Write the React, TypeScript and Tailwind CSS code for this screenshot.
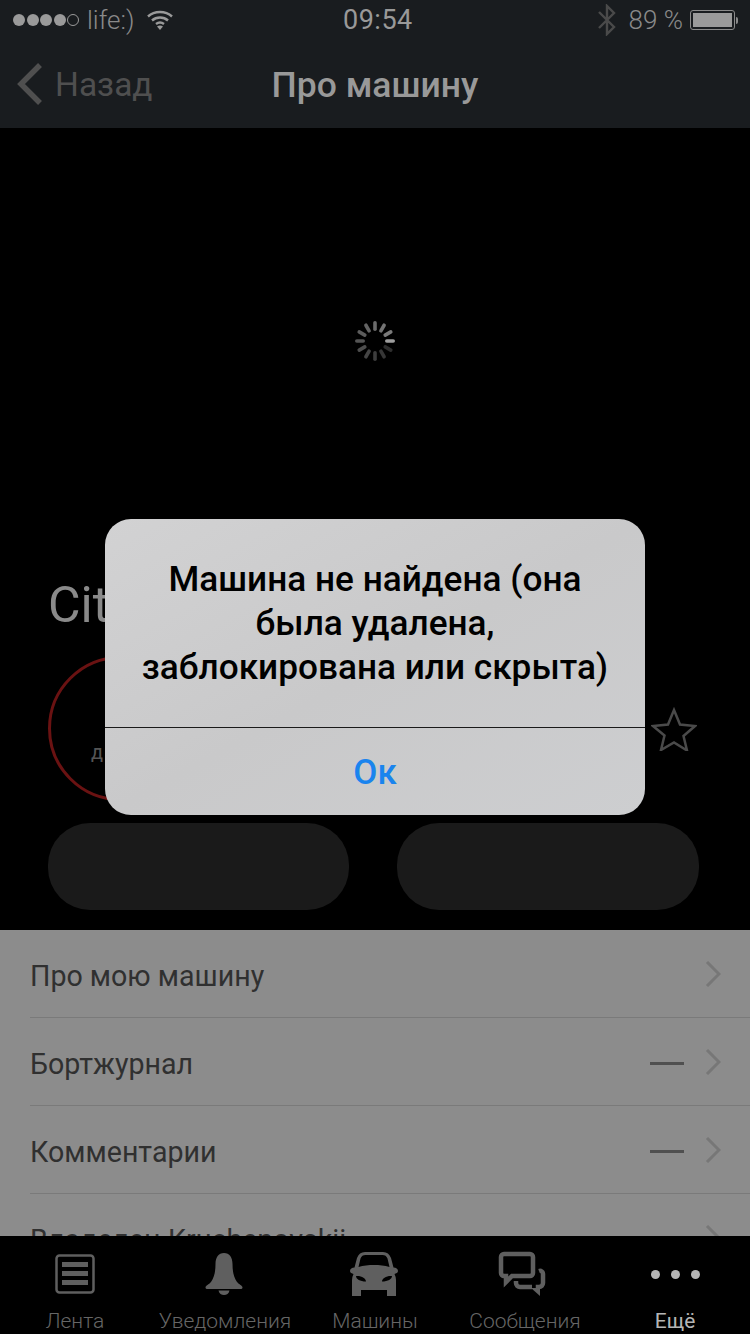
const rows = [
  { label: "Про мою машину", dash: false },
  { label: "Бортжурнал", dash: true },
  { label: "Комментарии", dash: true },
  { label: "Владелец Kruchenovskii", dash: false },
];

const spokes = [0, 30, 60, 90, 120, 150, 180, 210, 240, 270, 300, 330];

function Spinner() {
  return (
    <svg width="40" height="40" viewBox="0 0 40 40">
      {spokes.map((a, i) => (
        <rect
          key={a}
          x="18.2"
          y="0"
          width="3.6"
          height="10"
          rx="1.8"
          fill="#fff"
          opacity={i === 3 ? 0.62 : 0.18 + ((i + 8) % 12) * 0.03}
          transform={`rotate(${a} 20 20)`}
        />
      ))}
    </svg>
  );
}

function Chevron({ className }: { className: string }) {
  return (
    <svg className={className} width="16" height="28" viewBox="0 0 16 28" fill="none">
      <path d="M2 2l12 12L2 26" stroke="currentColor" strokeWidth="3" />
    </svg>
  );
}

function Row({ label, dash }: { label: string; dash: boolean }) {
  return (
    <div className="ml-[30px] flex h-[88px] shrink-0 items-center border-b border-[#7a7a7a] pr-[29px]">
      <span className="flex-1 pt-[5px] text-[28.6px] whitespace-nowrap text-[#303030]">{label}</span>
      {dash && <span className="mt-[3px] mr-[21px] h-[3px] w-[34px] bg-[#505050]" />}
      <Chevron className="text-[#777]" />
    </div>
  );
}

function FeedIcon() {
  return (
    <svg width="40" height="40" viewBox="0 0 40 40" fill="none">
      <rect x="1.5" y="1.5" width="37" height="37" rx="3" stroke="#5f5f5f" strokeWidth="2.500" />
      <rect x="7" y="8" width="26" height="5" fill="#5f5f5f" />
      <rect x="7" y="17" width="26" height="5" fill="#5f5f5f" />
      <rect x="7" y="26" width="26" height="5" fill="#5f5f5f" />
    </svg>
  );
}

function BellIcon() {
  return (
    <svg className="mr-[2px]" width="38" height="42" viewBox="0 0 38 42" fill="#5f5f5f">
      <path d="M19 0c5.500 0 8.500 4.500 8.500 11 0 7 1 13 4.500 18 2 2.500 5.500 3.500 5.500 5.500 0 1-1 1.500-2 1.500H2.500c-1 0-2-.5-2-1.500 0-2 3.500-3 5.500-5.500 3.500-5 4.500-11 4.500-18C10.500 4.500 13.500 0 19 0z" />
      <path d="M13.500 37.500h11c-.5 3-3 4.500-5.500 4.500s-5-1.500-5.500-4.500z" />
    </svg>
  );
}

function CarIcon() {
  return (
    <svg className="mr-[3px]" width="48" height="44" viewBox="0 0 48 44" fill="#5f5f5f">
      <path
        fillRule="evenodd"
        d="M15 0h18c4 0 6.500 2 8 6l2.500 9.500c2.500 0 4.500 1.500 4.500 3.500s-2 2.500-3.500 3c1 2 1.500 4 1.500 6v16h-9v-6H11v6H2V28c0-2 .5-4 1.500-6C2 21.500 0 21 0 19s2-3.500 4.500-3.500L7 6c1.500-4 4-6 8-6zm.5 3c-2.500 0-4 1-5 3.500L8.500 15c5-1.500 10-2 15.500-2s10.500.5 15.500 2L37.500 6.500c-1-2.500-2.500-3.500-5-3.500h-17zM6 24c0 3 4 5.500 10 5.500 0-3-4.500-6-10-5.500zm36 0c-5.500-.5-10 2.500-10 5.500 6 0 10-2.500 10-5.500z"
      />
    </svg>
  );
}

function ChatIcon() {
  return (
    <svg className="mr-[6px]" width="48" height="46" viewBox="0 0 48 46" fill="none">
      <path
        d="M6 3h26a3 3 0 0 1 3 3v16a3 3 0 0 1-3 3H14l-6 6v-6H6a3 3 0 0 1-3-3V6a3 3 0 0 1 3-3z"
        stroke="#5f5f5f"
        strokeWidth="4.500"
      />
      <path
        d="M41 20a3 3 0 0 1 4 3v9a4 4 0 0 1-4 4h-1v1M34 36H22a4 4 0 0 1-4-4v-2"
        stroke="#5f5f5f"
        strokeWidth="4.500"
      />
      <path d="M33 37h9v8z" fill="#5f5f5f" />
    </svg>
  );
}

function DotsIcon() {
  return (
    <div className="flex gap-[11px]">
      <span className="h-[9px] w-[9px] rounded-full bg-[#b5b5b5]" />
      <span className="h-[9px] w-[9px] rounded-full bg-[#b5b5b5]" />
      <span className="h-[9px] w-[9px] rounded-full bg-[#b5b5b5]" />
    </div>
  );
}

const tabs = [
  { label: "Лента", icon: <FeedIcon />, active: false },
  { label: "Уведомления", icon: <BellIcon />, active: false },
  { label: "Машины", icon: <CarIcon />, active: false },
  { label: "Сообщения", icon: <ChatIcon />, active: false },
  { label: "Ещё", icon: <DotsIcon />, active: true },
];

export default function App() {
  return (
    <div className="relative flex h-[1334px] w-[750px] flex-col overflow-hidden bg-black font-['Roboto',sans-serif]">
      <header className="h-[128px] shrink-0 bg-[#191c1f]">
        <div className="flex h-[40px] items-center pl-[13px] pr-[12px] text-[26px] text-[#8a8a8a]">
          <div className="flex w-[330px] items-center">
            <div className="flex items-center gap-[1.500px]">
              <span className="h-[12px] w-[12px] rounded-full bg-[#9a9a9a]" />
              <span className="h-[12px] w-[12px] rounded-full bg-[#9a9a9a]" />
              <span className="h-[12px] w-[12px] rounded-full bg-[#9a9a9a]" />
              <span className="h-[12px] w-[12px] rounded-full bg-[#9a9a9a]" />
              <span className="h-[12px] w-[12px] rounded-full border border-[#9a9a9a]" />
            </div>
            <span className="ml-[8px] font-light">life:)</span>
            <svg className="ml-[13px]" width="26" height="20" viewBox="0 0 26 20" fill="none" stroke="#9a9a9a" strokeWidth="2.400">
              <path d="M1 6.500C7.500 .5 18.500 .5 25 6.500" />
              <path d="M5 10.500c4.500-4 11.500-4 16 0" />
              <path d="M9 14c2.500-2 5.500-2 8 0" />
              <path d="M13 20l-3-3.500c2-1.200 4-1.200 6 0z" fill="#9a9a9a" stroke="none" />
            </svg>
          </div>
          <span className="pt-[1px] text-[27px] tracking-[0.5px] text-[#999]">09:54</span>
          <div className="flex flex-1 items-center justify-end">
            <svg width="18" height="32" viewBox="0 0 18 32" fill="none" stroke="#4a4a4a" strokeWidth="2.400">
              <path d="M1 8l15 15-7 7V2l7 7L1 24" />
            </svg>
            <span className="ml-[13px] font-light">89 %</span>
            <div className="ml-[7px] flex items-center">
              <div className="h-[20px] w-[45px] rounded-[3px] border border-[#8a8a8a] p-[2px]">
                <div className="h-full w-[39px] bg-[#9a9a9a]" />
              </div>
              <span className="ml-[1px] h-[7px] w-[2px] rounded-r bg-[#8a8a8a]" />
            </div>
          </div>
        </div>
        <div className="relative flex h-[88px] items-center justify-center pt-[3px]">
          <div className="absolute left-[17px] top-[17px] flex items-center text-[#4f4f4f]">
            <svg width="26" height="42" viewBox="0 0 26 42" fill="none" stroke="currentColor" strokeWidth="5.500">
              <path d="M23 2L4 21l19 19" />
            </svg>
            <span className="ml-[12px] pt-[3px] text-[33.5px]">Назад</span>
          </div>
          <h1 className="text-[35.500px] font-medium text-[#999]">Про машину</h1>
        </div>
      </header>

      <section className="flex h-[802px] shrink-0 flex-col px-[48px]">
        <div className="flex h-[447px] shrink-0 items-start justify-center pt-[193px]">
          <Spinner />
        </div>
        <div className="text-[50px] leading-[60px] text-[#8a8a8a]">Citroen</div>
        <div className="mt-[21px] flex h-[145px] shrink-0 items-center">
          <div className="flex h-[145px] w-[145px] items-center justify-start rounded-full border-[3px] border-[#6a1212] pl-[40px] pt-[46px] text-[20px] text-[#555]">
            д
          </div>
          <svg className="ml-auto mr-[5px]" width="46" height="44" viewBox="0 0 46 44" fill="none" stroke="#4a4a4a" strokeWidth="2.500">
            <path d="M23 3l6 14.500 15 1.500-11.500 10 3.500 14.500L23 35.500 10 43l3.500-14.500L2 19l15-1.500z" />
          </svg>
        </div>
        <div className="mt-[22px] flex gap-[48px]">
          <div className="h-[87px] w-[301px] rounded-[42px] bg-[#1a1a1a]" />
          <div className="h-[87px] w-[302px] rounded-[42px] bg-[#1a1a1a]" />
        </div>
      </section>

      <section className="flex h-[306px] shrink-0 flex-col overflow-hidden bg-[#8c8c8c]">
        {rows.map((r) => (
          <Row key={r.label} label={r.label} dash={r.dash} />
        ))}
      </section>

      <nav className="grid h-[98px] shrink-0 grid-cols-5 bg-black">
        {tabs.map((t) => (
          <div key={t.label} className="relative flex flex-col items-center">
            <div className="flex h-[66px] items-center justify-center pt-[10px]">{t.icon}</div>
            <span
              className={`mt-[4px] text-[21px] whitespace-nowrap ${t.active ? "text-[#b5b5b5]" : "font-light text-[#666]"}`}
            >
              {t.label}
            </span>
          </div>
        ))}
      </nav>

      <div className="absolute inset-0 flex items-center justify-center">
        <div className="w-[540px] overflow-hidden rounded-[26px] bg-gradient-to-br from-[#d2d2d3] via-[#c9c9ca] to-[#cdced0]">
          <div className="flex h-[209px] items-start justify-center border-b border-[#1a1a1a] px-[20px] pt-[38px] text-center text-[35.200px] leading-[44px] font-medium whitespace-nowrap text-black">
            <p>
              Машина не найдена (она
              <br />
              была удалена,
              <br />
              заблокирована или скрыта)
            </p>
          </div>
          <div className="flex h-[87px] items-center justify-center pt-[3px] text-[35px] font-medium text-[#1a84ee]">Ок</div>
        </div>
      </div>
    </div>
  );
}
